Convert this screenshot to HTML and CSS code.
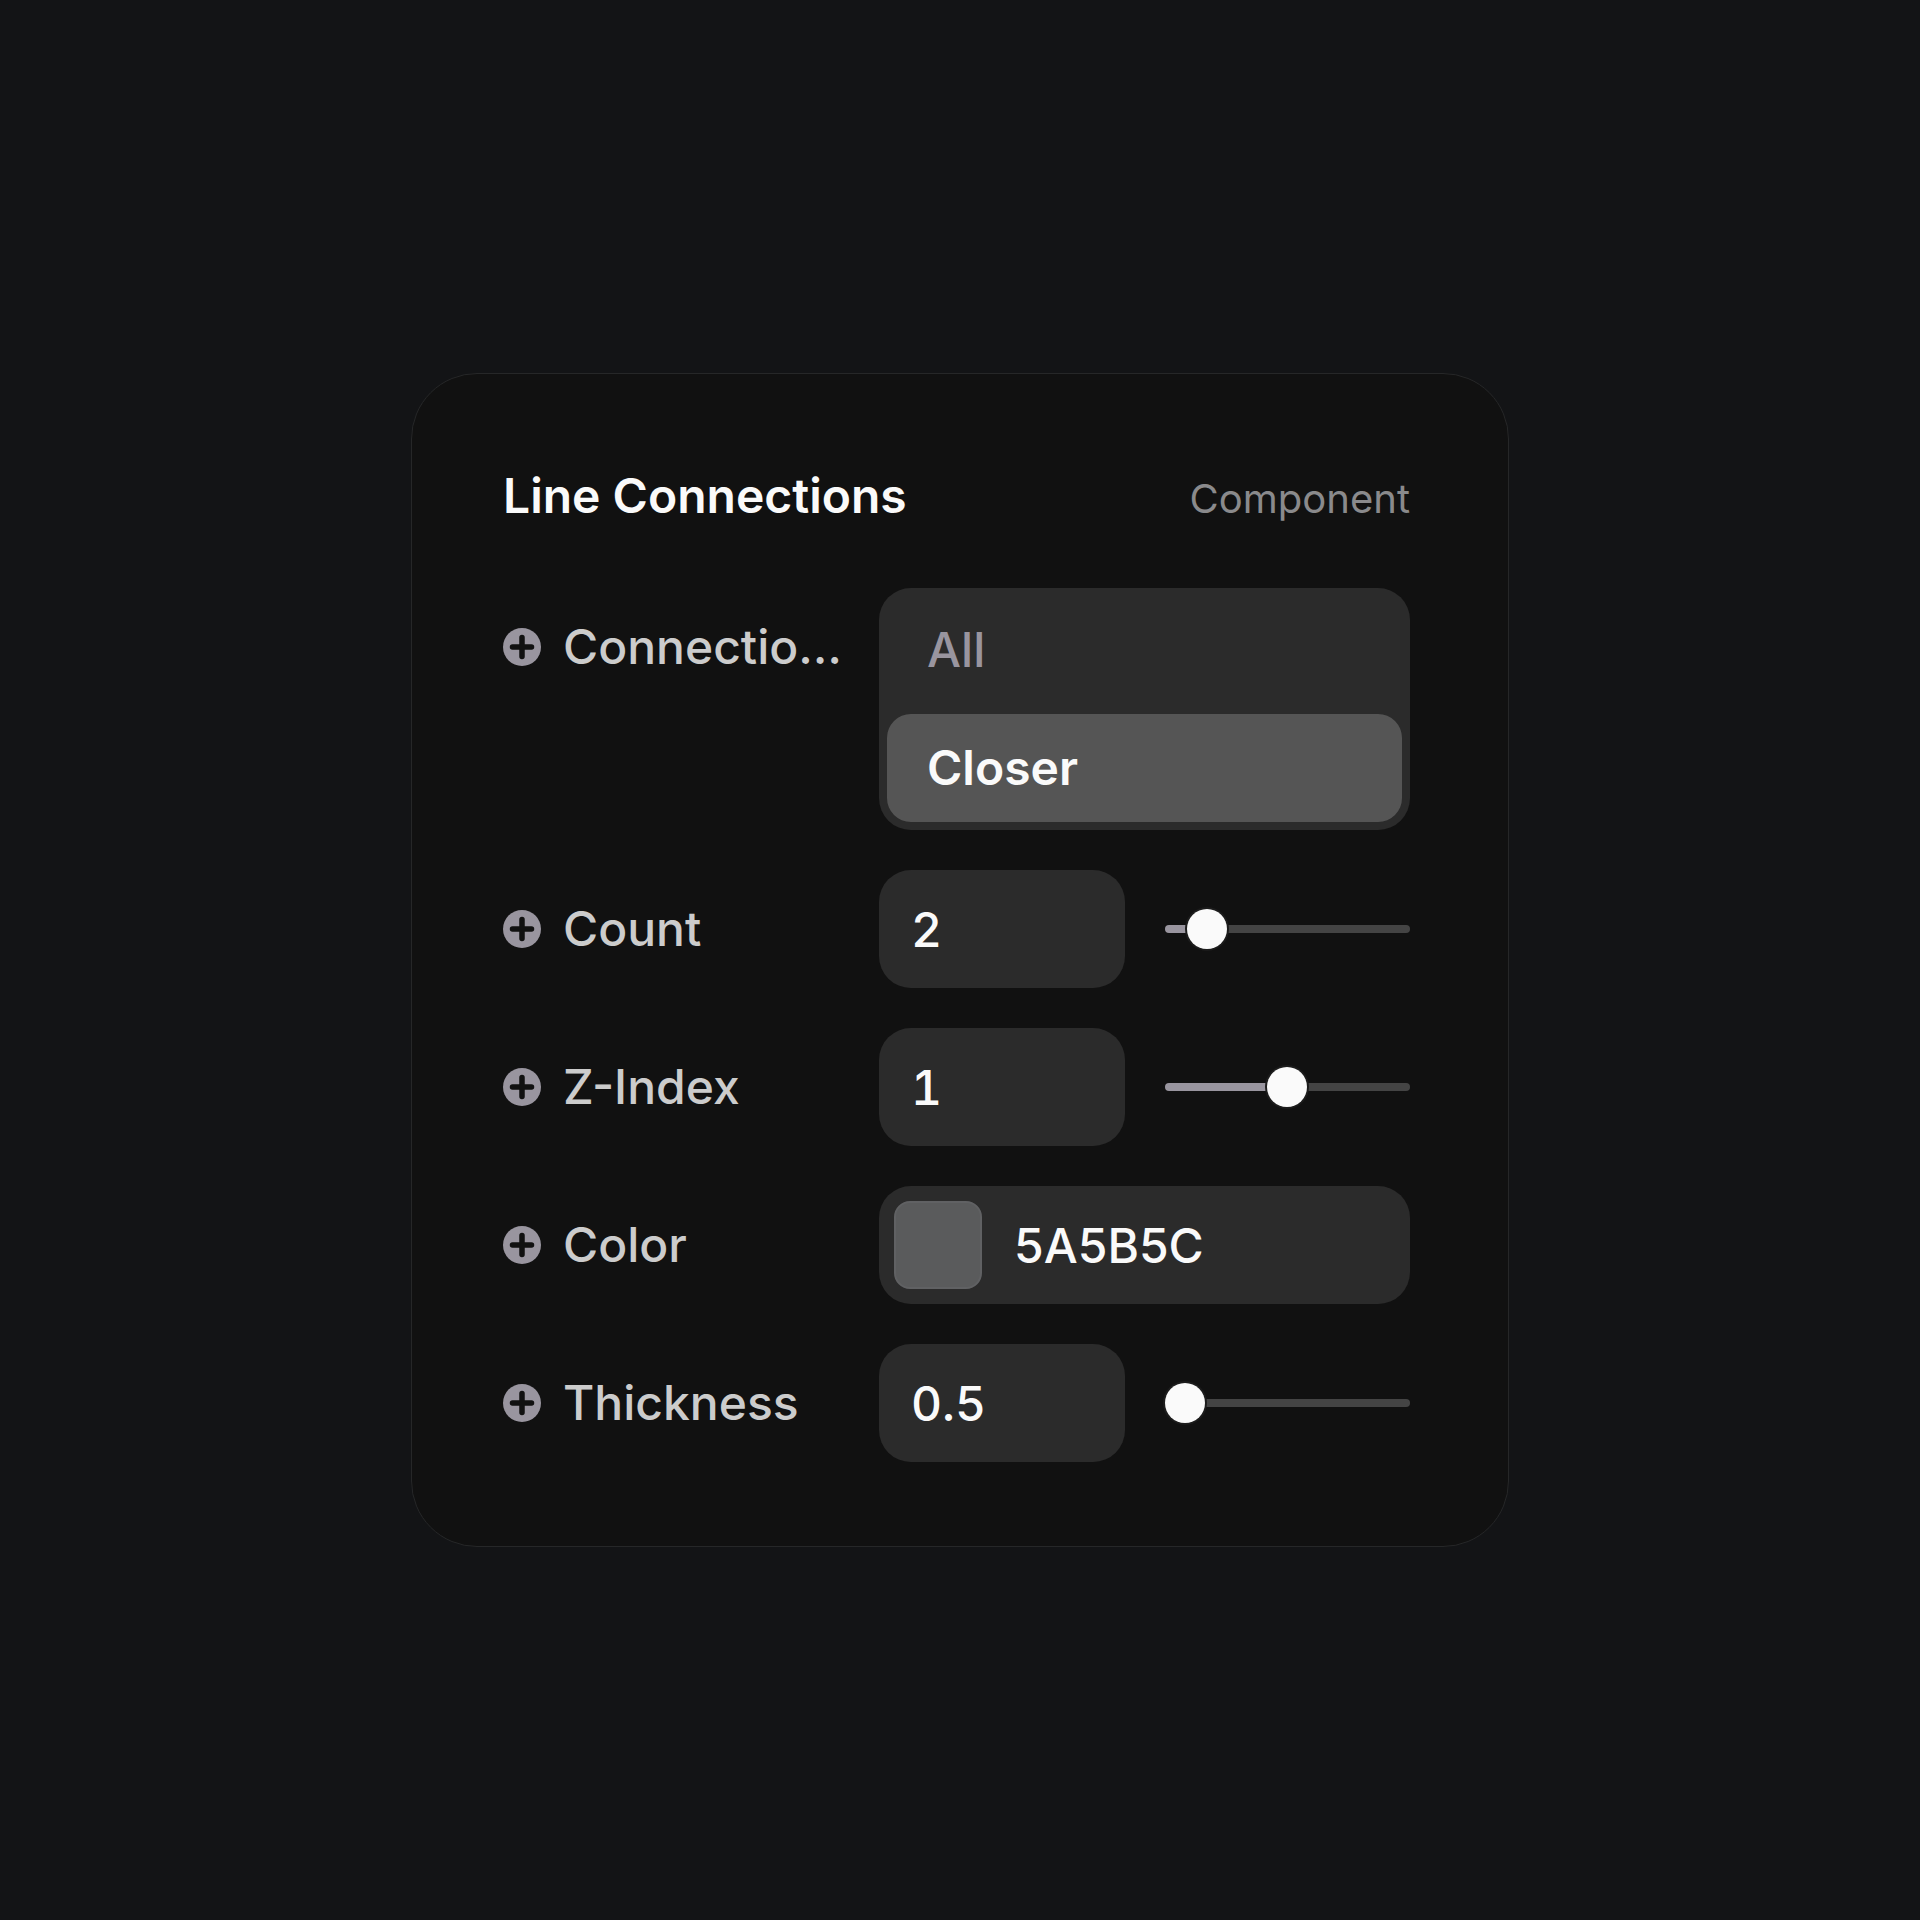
FILE: index.html
```html
<!DOCTYPE html>
<html lang="en">
<head>
    <meta charset="UTF-8">
    <meta name="viewport" content="width=device-width, initial-scale=1.0">
    <title>Line Connections</title>
    <link rel="stylesheet" href="styles.css">
</head>
<body>
    <svg class="sprite" aria-hidden="true">
        <symbol id="plus" viewBox="0 0 38 38">
            <circle cx="19" cy="19" r="19" fill="#99959f"/>
            <path d="M19 9.5v19M9.5 19h19" stroke="#111" stroke-width="5.5" stroke-linecap="round"/>
        </symbol>
    </svg>

    <main class="panel">
        <header class="panel-header">
            <h1>Line Connections</h1>
            <span class="panel-type">Component</span>
        </header>

        <form class="rows">
            <div class="row">
                <div class="row-label">
                    <button type="button" class="add" aria-label="Add Connections variable"><svg><use href="#plus"/></svg></button>
                    <span class="label-text" id="connections-label">Connectio…</span>
                </div>
                <div class="segmented" role="radiogroup" aria-labelledby="connections-label">
                    <label class="segment"><input type="radio" name="connections" value="all"><span>All</span></label>
                    <label class="segment"><input type="radio" name="connections" value="closer" checked><span>Closer</span></label>
                </div>
            </div>

            <div class="row">
                <div class="row-label">
                    <button type="button" class="add" aria-label="Add Count variable"><svg><use href="#plus"/></svg></button>
                    <label class="label-text" for="count">Count</label>
                </div>
                <div class="number">
                    <input type="text" inputmode="decimal" class="field" id="count" value="2">
                    <input type="range" class="slider" aria-label="Count" min="1" max="10" step="1" value="2" style="--fill: 11%">
                </div>
            </div>

            <div class="row">
                <div class="row-label">
                    <button type="button" class="add" aria-label="Add Z-Index variable"><svg><use href="#plus"/></svg></button>
                    <label class="label-text" for="zindex">Z-Index</label>
                </div>
                <div class="number">
                    <input type="text" inputmode="decimal" class="field" id="zindex" value="1">
                    <input type="range" class="slider" aria-label="Z-Index" min="0" max="2" step="1" value="1" style="--fill: 50%">
                </div>
            </div>

            <div class="row">
                <div class="row-label">
                    <button type="button" class="add" aria-label="Add Color variable"><svg><use href="#plus"/></svg></button>
                    <label class="label-text" for="color">Color</label>
                </div>
                <div class="color">
                    <button type="button" class="swatch" aria-label="Pick color"></button>
                    <input type="text" class="field" id="color" value="5A5B5C">
                </div>
            </div>

            <div class="row">
                <div class="row-label">
                    <button type="button" class="add" aria-label="Add Thickness variable"><svg><use href="#plus"/></svg></button>
                    <label class="label-text" for="thickness">Thickness</label>
                </div>
                <div class="number">
                    <input type="text" inputmode="decimal" class="field" id="thickness" value="0.5">
                    <input type="range" class="slider" aria-label="Thickness" min="0.5" max="10" step="0.5" value="0.5" style="--fill: 0%">
                </div>
            </div>
        </form>
    </main>

    <script>
        // Keep each number field and its slider in step
        document.querySelectorAll(".number").forEach(function(group) {
            const field = group.querySelector(".field");
            const slider = group.querySelector(".slider");

            function paint() {
                const fill = (slider.value - slider.min) / (slider.max - slider.min) * 100;
                slider.style.setProperty("--fill", fill + "%");
            }

            slider.addEventListener("input", function() {
                field.value = slider.value;
                paint();
            });
            field.addEventListener("change", function() {
                slider.value = field.value;
                paint();
            });
        });
    </script>
</body>
</html>
```

FILE: styles.css
```css
* {
    box-sizing: border-box;
}

body {
    display: flex;
    align-items: center;
    justify-content: center;
    min-height: 100vh;
    margin: 0;
    background: #131416;
    color: #fafafa;
    font-family: Inter, sans-serif;
    font-size: 48px;
    line-height: 60px;
}

input,
button {
    margin: 0;
    padding: 0;
    border: none;
    background: none;
    color: inherit;
    font: inherit;
}

.sprite {
    display: none;
}

.panel {
    width: 100%;
    max-width: 1098px;
    padding: 92px 98px 84px 91px;
    border: 1px solid #262728;
    border-radius: 66px;
    background: #111;
}

.panel-header {
    display: flex;
    align-items: baseline;
    justify-content: space-between;
    margin-bottom: 59px;
}

h1 {
    margin: 0;
    font-size: 48px;
    font-weight: 600;
}

.panel-type {
    color: #8a8a8c;
    font-size: 40px;
}

.rows {
    display: flex;
    flex-direction: column;
    gap: 40px;
}

.row {
    display: grid;
    grid-template-columns: minmax(0, 344fr) minmax(0, 531fr);
    column-gap: 32px;
    align-items: start;
}

.row-label {
    display: flex;
    align-items: center;
    gap: 22px;
    height: 118px;
    color: #ccc;
    font-weight: 500;
}

.add {
    flex: none;
    width: 38px;
    height: 38px;
    cursor: pointer;
}

.add svg {
    display: block;
    width: 38px;
    height: 38px;
}

.label-text {
    overflow: hidden;
    text-overflow: ellipsis;
    white-space: nowrap;
}

.segmented {
    padding: 8px;
    border-radius: 32px;
    background: #2b2b2b;
}

.segment {
    position: relative;
    display: block;
    cursor: pointer;
}

.segment + .segment {
    margin-top: 10px;
}

.segment input {
    position: absolute;
    opacity: 0;
}

.segment span {
    display: block;
    padding: 24px 40px;
    border-radius: 24px;
    color: #99959f;
    font-weight: 500;
}

.segment input:checked + span {
    background: #555;
    color: #fafafa;
    font-weight: 600;
}

.number {
    display: grid;
    grid-template-columns: minmax(0, 1fr) minmax(0, 1fr);
    gap: 40px;
    align-items: center;
}

.field {
    width: 100%;
    height: 118px;
    padding: 0 32px;
    border-radius: 32px;
    outline: none;
    background: #2b2b2b;
    font-weight: 500;
}

.number .field {
    font-variant-numeric: tabular-nums;
}

.color {
    display: flex;
    align-items: center;
    padding-left: 15px;
    border-radius: 32px;
    background: #2b2b2b;
}

.color .field {
    background: none;
}

.swatch {
    flex: none;
    width: 88px;
    height: 88px;
    border: 2px solid #606163;
    border-radius: 16px;
    background: #5a5b5c;
    cursor: pointer;
}

.slider {
    width: 100%;
    height: 40px;
    appearance: none;
    -webkit-appearance: none;
    cursor: pointer;
}

.slider::-webkit-slider-runnable-track {
    height: 8px;
    border-radius: 4px;
    background: linear-gradient(to right, #99959f var(--fill), #444 var(--fill));
}

.slider::-webkit-slider-thumb {
    -webkit-appearance: none;
    width: 40px;
    height: 40px;
    margin-top: -16px;
    border-radius: 50%;
    background: #fafafa;
    box-shadow: 0 0 0 2px #1c1c1c;
}
```
